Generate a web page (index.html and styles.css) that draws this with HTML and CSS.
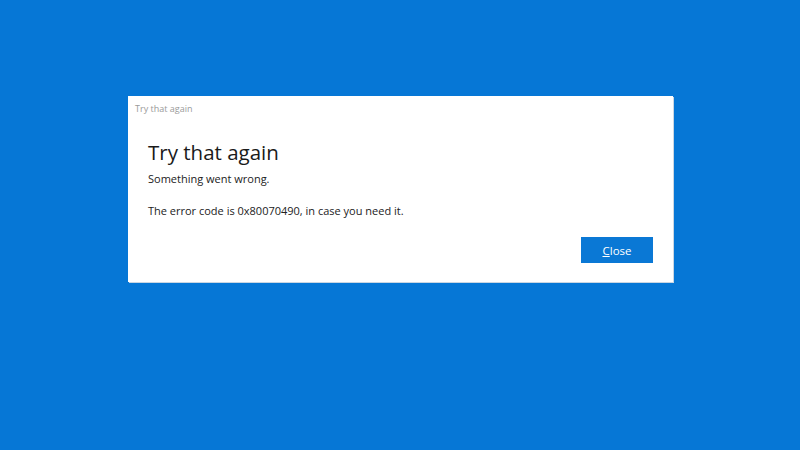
FILE: index.html
```html
<!DOCTYPE html>
<html>
<head>
<meta charset="utf-8">
<link rel="stylesheet" href="styles.css">
</head>
<body>
<div class="desk">
  <div class="dialog">
    <div class="titlebar">Try that again</div>
    <div class="content">
      <h1 class="heading">Try that again</h1>
      <p class="msg">Something went wrong.</p>
      <p class="msg code">The error code is 0x80070490, in case you need it.</p>
    </div>
    <div class="actions">
      <button class="btn"><u>C</u>lose</button>
    </div>
  </div>
</div>
</body>
</html>
```
FILE: styles.css
```css
html, body {
  margin: 0;
  padding: 0;
}
body {
  width: 800px;
  height: 450px;
  background: #0677d6;
  font-family: "Open Sans", "Noto Sans", sans-serif;
  overflow: hidden;
}
.desk {
  padding: 96px 0 0 128px;
}
.dialog {
  width: 545px;
  height: 186px;
  background: #ffffff;
  box-sizing: border-box;
  display: flex;
  flex-direction: column;
  box-shadow: 1px 1px 0 #c9d6e3;
}
.titlebar {
  font-size: 9px;
  color: #9a9a9a;
  padding: 6px 0 0 7px;
  height: 14px;
}
.content {
  padding: 22px 0 0 20px;
}
.heading {
  margin: 0;
  font-weight: 400;
  font-size: 20.5px;
  color: #1a1a1a;
  line-height: 28px;
}
.msg {
  margin: 6px 0 0 0;
  font-size: 11px;
  color: #222;
  line-height: 14px;
}
.code {
  margin-top: 18px;
}
.actions {
  display: flex;
  justify-content: flex-end;
  padding: 19px 20px 0 0;
}
.btn {
  width: 72px;
  height: 26px;
  background: #0a78d5;
  color: #ffffff;
  border: none;
  font-family: inherit;
  font-size: 11.5px;
  padding: 0;
}
```
